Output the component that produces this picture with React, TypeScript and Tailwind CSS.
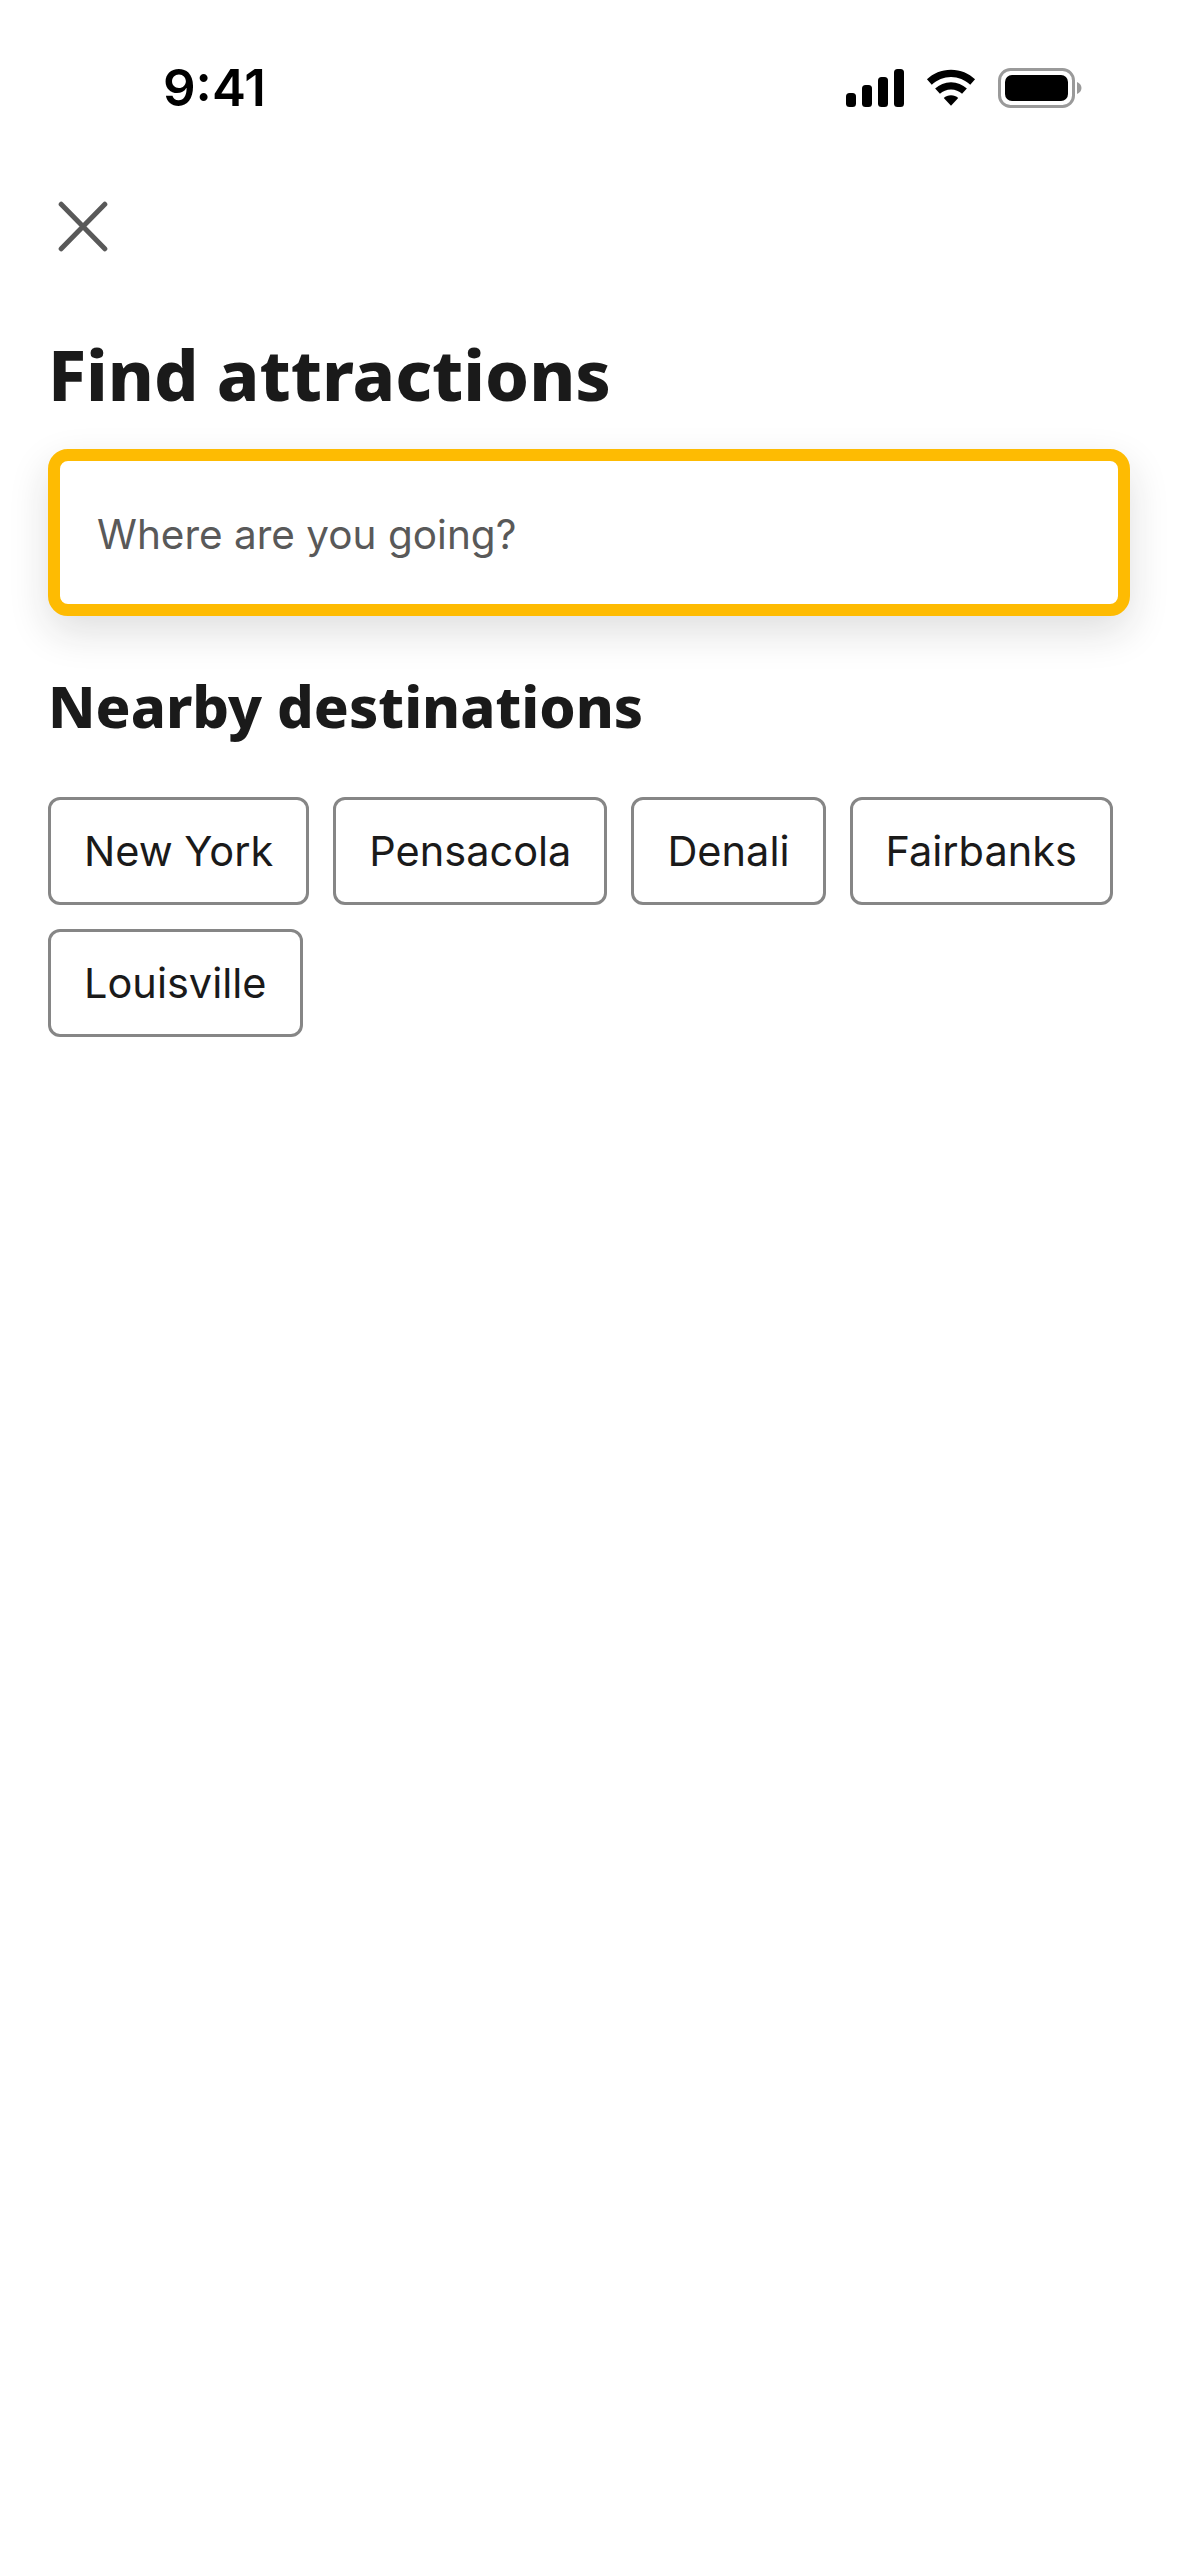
const chips = ["New York", "Pensacola", "Denali", "Fairbanks", "Louisville"];

function StatusIcons() {
  return (
    <div className="flex items-center gap-[22px]">
      <svg width="58" height="38" viewBox="0 0 58 38" fill="#000">
        <rect x="0" y="24" width="10" height="14" rx="3.500" />
        <rect x="16" y="16" width="10" height="22" rx="3.500" />
        <rect x="32" y="8" width="10" height="30" rx="3.500" />
        <rect x="48" y="0" width="10" height="38" rx="3.500" />
      </svg>
      <svg width="50" height="38" viewBox="0 0 52 38" fill="#000">
        <path d="M26 0C16 0 7.500 3.800 1 10l5 5.500C11.500 10.500 18.500 7.500 26 7.500s14.500 3 20 8l5-5.500C44.500 3.800 36 0 26 0z" />
        <path d="M26 13c-6.500 0-12 2.500-16.500 6.500l5 5.500c3-2.800 7-4.500 11.500-4.500s8.500 1.700 11.500 4.500l5-5.500C38 15.500 32.500 13 26 13z" />
        <path d="M26 26.500c-3 0-5.500 1-7.500 2.800L26 37.500l7.500-8.200c-2-1.800-4.500-2.800-7.500-2.800z" />
      </svg>
      <svg width="84" height="40" viewBox="0 0 84 40">
        <rect x="1.500" y="1.500" width="74" height="37" rx="11" fill="none" stroke="#9a9a9a" strokeWidth="3" />
        <rect x="7" y="7" width="63" height="26" rx="7" fill="#000" />
        <path d="M79 14c2.500 1 4.500 3.200 4.500 6s-2 5-4.500 6z" fill="#9a9a9a" />
      </svg>
    </div>
  );
}

export default function App() {
  return (
    <div className="min-h-[2556px] w-[1179px] bg-white font-['Inter',sans-serif] text-[#1a1a1a]">
      <div className="flex h-[198px] items-start justify-between pl-[163px] pr-[97px] pt-[60px]">
        <span className="text-[51px] leading-[56px] font-semibold text-black">9:41</span>
        <div className="pt-[8px]">
          <StatusIcons />
        </div>
      </div>

      <div className="px-[48px]">
        <button className="flex h-[56px] w-[60px] items-center pl-[10px] text-[#595959]">
          <svg width="55" height="54" viewBox="0 0 55 54" fill="none" stroke="currentColor" strokeWidth="5.500" strokeLinecap="round">
            <path d="M3.500 3l48 49M51.500 3L3.500 52" />
          </svg>
        </button>

        <h1 className="mt-[78px] font-['Noto_Sans',sans-serif] text-[70px] leading-[84px] font-extrabold">
          Find attractions
        </h1>

        <div className="mt-[33px] flex h-[167px] w-[1082px] items-center rounded-[20px] border-[12px] border-[#febb02] bg-white pl-[37px] pt-[6px] text-[40.500px] text-[#595959] shadow-[0_16px_40px_rgba(26,26,26,0.14)]">
          Where are you going?
        </div>

        <h2 className="mt-[55px] font-['Noto_Sans',sans-serif] text-[57.800px] leading-[70px] font-extrabold">
          Nearby destinations
        </h2>

        <div className="mt-[56px] flex flex-wrap gap-[24px]">
          {chips.map((chip) => (
            <div
              key={chip}
              className="flex h-[108px] items-center rounded-[12px] border-[3px] border-[#868686] px-[33px] text-[41.500px]"
            >
              {chip}
            </div>
          ))}
        </div>
      </div>
    </div>
  );
}
